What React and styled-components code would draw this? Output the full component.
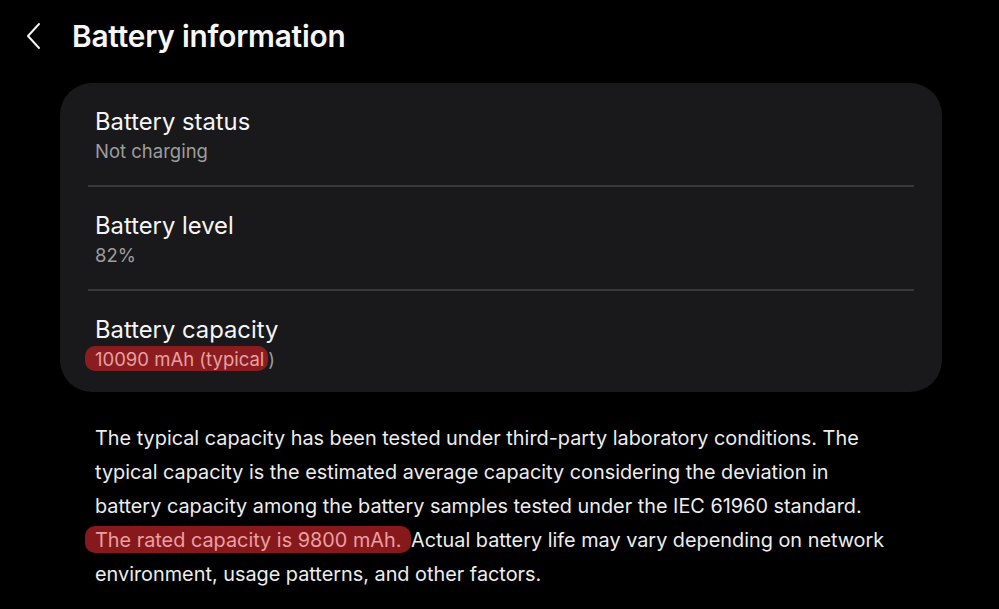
import React from "react";
import styled, { createGlobalStyle } from "styled-components";

const Global = createGlobalStyle`
  html, body { margin: 0; padding: 0; background: #000; }
  body { font-family: "Inter", "Noto Sans", sans-serif; -webkit-font-smoothing: antialiased; }
`;

const Page = styled.div`
  width: 999px;
  height: 609px;
  background: #000;
  color: #fafafa;
  overflow: hidden;
  box-sizing: border-box;
`;

const Header = styled.header`
  display: flex;
  align-items: center;
  height: 72px;
  padding-left: 24px;
  gap: 30px;
  margin-bottom: 11px;
`;

const BackButton = styled.button`
  background: none;
  border: none;
  padding: 0;
  width: 18px;
  height: 28px;
  display: flex;
  align-items: center;
  justify-content: center;
  color: #f2f2f2;
  cursor: pointer;
`;

const Title = styled.h1`
  margin: 0;
  font-size: 29.8px;
  font-weight: 600;
  letter-spacing: -0.2px;
  color: #f7f7f7;
`;

const Card = styled.section`
  margin: 0 57px 0 60px;
  background: #19191b;
  border-radius: 32px;
  padding: 0 28px;
  height: 309px;
  box-sizing: border-box;
  display: flex;
  flex-direction: column;
`;

const Row = styled.div`
  display: flex;
  flex-direction: column;
  justify-content: center;
  gap: 1px;
  padding: 3px 0 0 7px;
  height: ${(p) => p.h}px;
  border-bottom: ${(p) => (p.last ? "none" : "2px solid #38383a")};
  box-sizing: border-box;
`;

const RowTitle = styled.div`
  font-size: 23.8px;
  line-height: 30px;
  color: #f5f5f5;
`;

const RowSub = styled.div`
  font-size: 18.5px;
  line-height: 26px;
  color: #9d9d9f;
`;

const Marker = styled.span`
  background: rgba(165, 30, 34, 0.82);
  color: #e8a0a2;
  border-radius: 10px;
  padding: 2px 4px 1px 10px;
  margin-left: -10px;
  white-space: nowrap;
`;

const Note = styled.p`
  margin: 29px 0 0 95px;
  font-size: 19.85px;
  line-height: 34px;
  color: #ededed;
  white-space: nowrap;
`;

export default function App() {
  return (
    <Page>
      <Global />
      <Header>
        <BackButton aria-label="Back">
          <svg width="16" height="28" viewBox="0 0 16 28" fill="none">
            <path d="M14 2 L3 14 L14 26" stroke="#f2f2f2" strokeWidth="2" strokeLinecap="round" strokeLinejoin="round" />
          </svg>
        </BackButton>
        <Title>Battery information</Title>
      </Header>
      <Card>
        <Row h={104}>
          <RowTitle>Battery status</RowTitle>
          <RowSub>Not charging</RowSub>
        </Row>
        <Row h={104}>
          <RowTitle>Battery level</RowTitle>
          <RowSub>82%</RowSub>
        </Row>
        <Row h={101} last>
          <RowTitle>Battery capacity</RowTitle>
          <RowSub>
            <Marker>10090 mAh (typical</Marker>)
          </RowSub>
        </Row>
      </Card>
      <Note>
        The typical capacity has been tested under third-party laboratory conditions. The
        <br />
        typical capacity is the estimated average capacity considering the deviation in
        <br />
        battery capacity among the battery samples tested under the IEC 61960 standard.
        <br />
        <Marker>The rated capacity is 9800 mAh. </Marker>Actual battery life may vary depending on network
        <br />
        environment, usage patterns, and other factors.
      </Note>
    </Page>
  );
}
